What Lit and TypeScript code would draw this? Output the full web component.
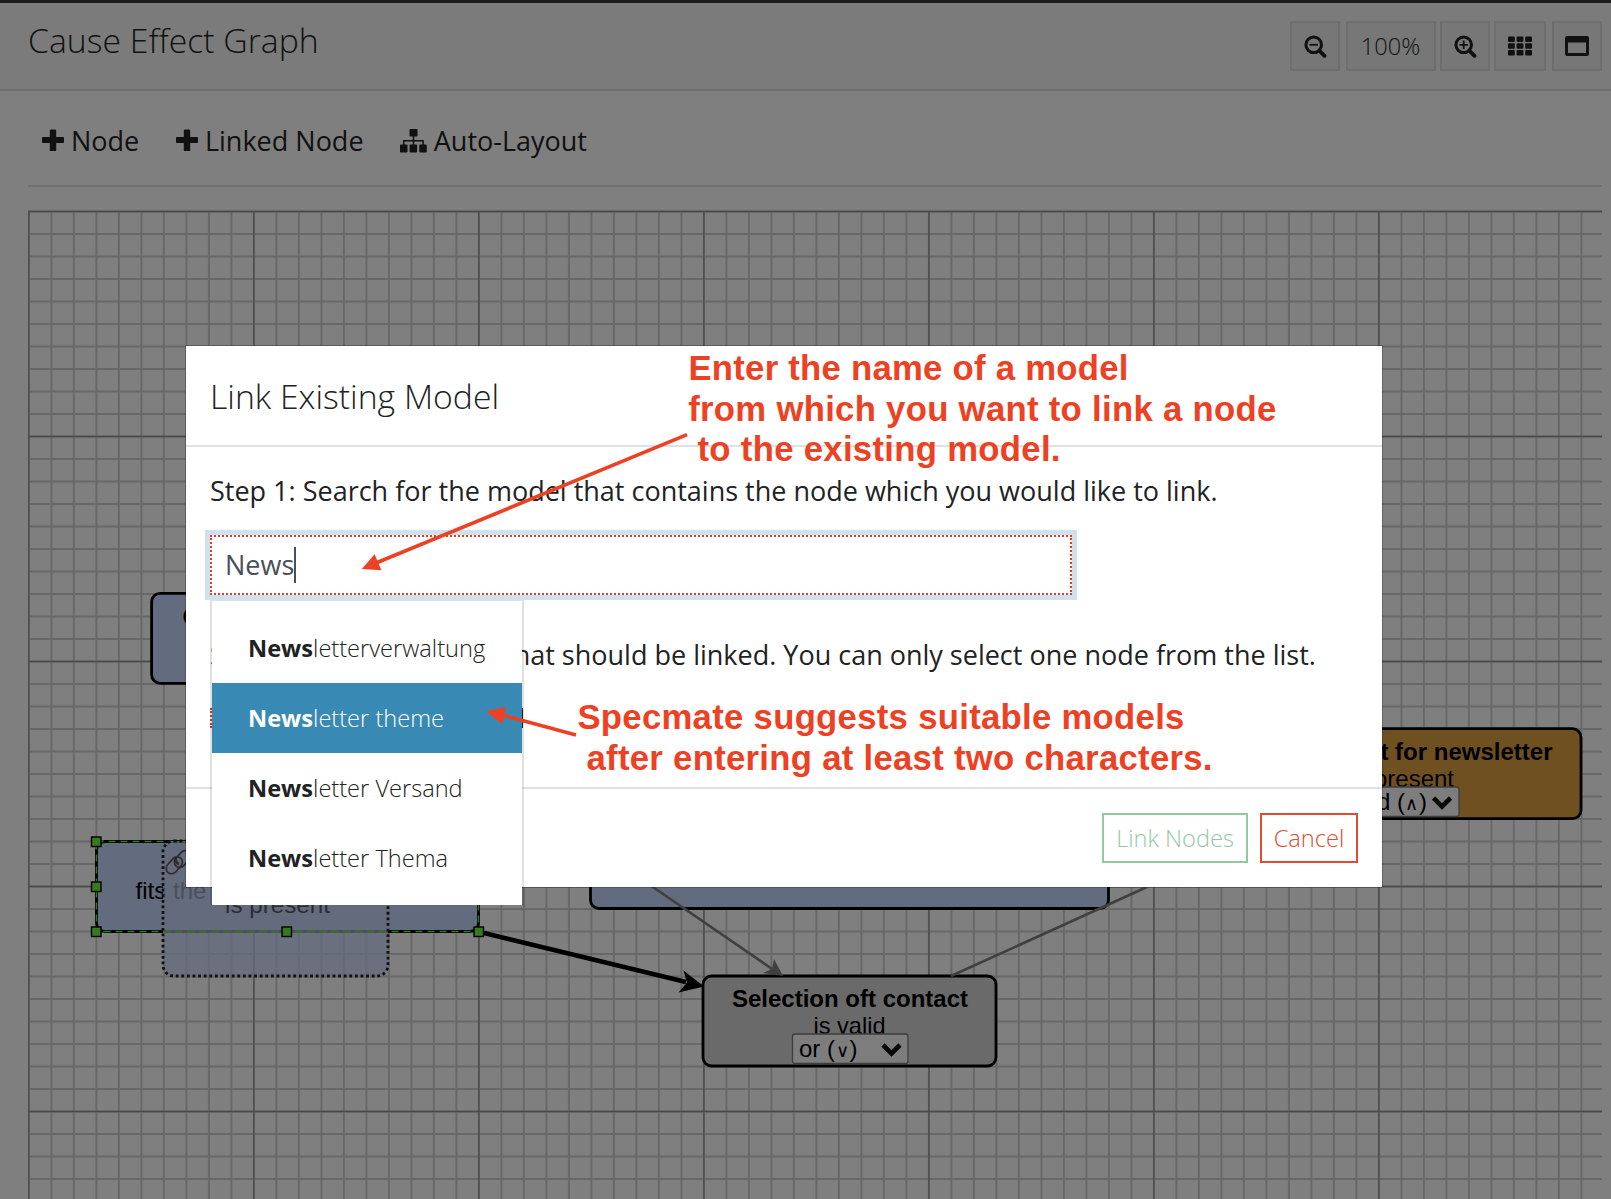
import { LitElement, html, css, svg } from "lit";
import { customElement } from "lit/decorators.js";

const chevron = (x: number, y: number) =>
  svg`<path d="M${x} ${y}l8.5 8.5l8.5-8.5" fill="none" stroke="#080808" stroke-width="4.6"></path>`;

const handle = (x: number, y: number) =>
  svg`<rect x=${x - 5} y=${y - 5} width="9.5" height="9.5" fill="#357a1f" stroke="#000" stroke-width="1.4"></rect>`;

const gridPath = (step: number) => {
  let d = "";
  for (let x = 28.9; x < 1602; x += step) d += `M${x} 210.7V1199`;
  for (let y = 211.5; y < 1199; y += step) d += `M28 ${y}H1602`;
  return d;
};
const minorGrid = gridPath(22.5);
const majorGrid = gridPath(225);

@customElement("graph-canvas")
export class GraphCanvas extends LitElement {
  static styles = css`
    :host { display: block; overflow: hidden; }
    svg { display: block; font-family: "Liberation Sans", Arial, sans-serif; font-size: 24px; }
    .bold { font-weight: 700; }
    .sign { font-family: "DejaVu Sans Light", "DejaVu Sans", sans-serif; font-weight: 200; font-size: 18px; }
  `;
  render() {
    return html`<svg width="1574" height="989" viewBox="28 210 1574 989">
      <path d=${minorGrid} stroke="#686868" stroke-width="1.9" fill="none"></path>
      <path d=${majorGrid} stroke="#4a4a4a" stroke-width="1.3" fill="none"></path>

      <g fill="#636b7e" stroke="#000" stroke-width="2.8">
        <rect x="151.6" y="593.3" width="380" height="90" rx="8.5"></rect>
        <rect x="590.5" y="818" width="518" height="90.5" rx="8.5"></rect>
        <rect x="96.5" y="841.5" width="382" height="90" rx="8.5"></rect>
        <rect x="703" y="976" width="293" height="90" rx="8.5" fill="#6a6a6a"></rect>
        <rect x="1200" y="728.7" width="381" height="90" rx="8.5" fill="#6f5020"></rect>
      </g>
      <rect x="96.5" y="841.5" width="382" height="90" fill="none" stroke="#2f7a1c" stroke-width="1.4" stroke-dasharray="7 5"></rect>
      <text x="182.5" y="625" class="bold">Contact</text>
      <text x="135.5" y="899" textLength="71" lengthAdjust="spacingAndGlyphs">fits the</text>
      <rect x="163" y="841" width="225" height="135" rx="11" fill="#636b7e" fill-opacity=".75" stroke="#111" stroke-width="2.8" stroke-dasharray="2.8 2.8"></rect>
      <path d="M163 931.5H388" stroke="#347322" stroke-width="1.4" stroke-dasharray="7 5"></path>
      <g fill="none" stroke="#2e2c30" stroke-width="1.7">
        <rect x="-9.500" y="-5.4" width="19" height="10.8" rx="5.4" transform="translate(174.300 865.300) rotate(-48)"></rect>
        <rect x="-9.500" y="-5.4" width="19" height="10.8" rx="5.4" transform="translate(182.500 859) rotate(-48)"></rect>
        <path d="M175.500 857.500q-.5 5 3.500 6.500" stroke-width="3"></path>
      </g>
      <text x="225" y="912.7" fill="#2d2d31" textLength="105" lengthAdjust="spacingAndGlyphs">is present</text>
      ${handle(96.5, 842)} ${handle(96.5, 887)} ${handle(96.5, 932)} ${handle(287, 932)} ${handle(479, 932)}

      <g stroke="#404040" stroke-width="2.6" fill="#404040">
        <path d="M650 885L775 971"></path>
        <path d="M951 976L1147 887"></path>
        <path d="M783 976L763 973L772 969L774 959Z" stroke="none"></path>
      </g>
      <path d="M484 933L686 982" stroke="#000" stroke-width="4.6"></path>
      <path d="M704 986.5L678.5 992.5L687 982.5L683.5 970.5Z"></path>

      <text x="732" y="1006.7" class="bold" textLength="236" lengthAdjust="spacingAndGlyphs">Selection oft contact</text>
      <text x="813.5" y="1034" textLength="72" lengthAdjust="spacingAndGlyphs">is valid</text>
      <rect x="792.5" y="1034" width="115.5" height="29.5" rx="2.5" fill="#7d7d7d" stroke="#3e3e3e" stroke-width="1.3"></rect>
      <text x="799" y="1056.7">or (</text>
      <text x="836" y="1056.7" class="sign">∨</text>
      <text x="849.5" y="1056.7">)</text>
      ${chevron(883, 1045)}

      <text x="1552.5" y="760" text-anchor="end" class="bold">Request for newsletter</text>
      <text x="1454" y="787" text-anchor="end">is present</text>
      <rect x="1344" y="787" width="115" height="29.5" rx="2.5" fill="#7d7d7d" stroke="#3e3e3e" stroke-width="1.3"></rect>
      <text x="1405" y="809.8" text-anchor="end">and (</text>
      <text x="1405" y="809.8" class="sign">∧</text>
      <text x="1419" y="809.8">)</text>
      ${chevron(1433.5, 798)}
    </svg>`;
  }
}

@customElement("link-dialog")
export class LinkDialog extends LitElement {
  static styles = css`
    :host { display: flex; flex-direction: column; box-sizing: border-box; width: 1196px; height: 541px; background: #fff; color: #212223; font: 27px/40px "Open Sans", sans-serif; box-shadow: 0 0 0 1px rgba(0,0,0,.2); }
    .head { box-sizing: border-box; height: 101px; flex: none; padding: 25px 24px; border-bottom: 2px solid #dee2e6; font-size: 33.75px; font-weight: 300; line-height: 50px; }
    .body { flex: 1; padding: 24px 24px 0; }
    .step { height: 40px; white-space: nowrap; }
    .search { position: relative; margin-top: 24px; }
    .field { box-sizing: border-box; width: 862px; height: 60px; border: 2px dotted #ee3322; outline: 5px solid #cde2ed; background: #fff; color: #495057; padding: 8px 13px; display: flex; align-items: center; }
    .caret { width: 2px; height: 36px; background: #495057; }
    .two { margin-top: 40px; height: 40px; white-space: nowrap; display: flex; }
    .nodes { display: flex; margin-top: 33px; width: 313px; height: 20px; border-left: 2px dotted #ee3322; border-right: 2px solid #222; box-sizing: border-box; }
    .menu { position: absolute; z-index: 2; top: 65px; left: 0; box-sizing: border-box; width: 313.5px; height: 305px; padding: 12px 0; background: #fff; background-clip: padding-box; border: solid rgba(0,0,0,.12); border-width: 1px 2px 0; font-size: 23.6px; font-weight: 300; }
    .row { height: 70px; display: flex; align-items: center; padding-left: 36px; white-space: pre; }
    .row.on { background: #3989b5; color: #fff; }
    b { font-weight: 700; }
    .foot { box-sizing: border-box; height: 100px; flex: none; border-top: 2px solid #dee2e6; display: flex; justify-content: flex-end; gap: 12px; padding: 24px 24px 0 0; }
    .btn { box-sizing: border-box; height: 50px; width: 146px; border: 2px solid #93c9a1; color: #93c9a1; display: flex; justify-content: center; align-items: center; font-size: 23.6px; font-weight: 300; }
    .cancel { width: 98px; border-color: #e04b32; color: #e04b32; }
  `;
  render() {
    const names = ["letterverwaltung", "letter theme", "letter Versand", "letter Thema"];
    return html`
      <div class="head">Link Existing Model</div>
      <div class="body">
        <div class="step">Step 1: Search for the model that contains the node which you would like to link.</div>
        <div class="search">
          <div class="field">News<span class="caret"></span></div>
          <div class="menu">${names.map((n, i) => html`<div class="row ${i === 1 ? "on" : ""}"><b>News</b>${n}</div>`)}</div>
        </div>
        <div class="two">Step 2: Select the node that should be linked. You can only select one node from the list.</div>
        <div class="nodes"></div>
      </div>
      <div class="foot"><div class="btn">Link Nodes</div><div class="btn cancel">Cancel</div></div>`;
  }
}

const search = (sign: string) => html`<svg width="24" height="24" viewBox="0 0 24 24" fill="none" stroke="#111"><circle cx="10.7" cy="10.8" r="7.8" stroke-width="3"></circle><path d="M16.3 16.6L21.5 21.8" stroke-width="3.8" stroke-linecap="round"></path><path d=${sign} stroke-width="1.8"></path></svg>`;
const plus = html`<svg class="plus" width="22" height="22" viewBox="0 0 22 22"><path d="M9 0h4q1.200 0 1.200 1v6.600H21q1 0 1 1v4q0 1-1 1h-6.800v7.400q0 1-1.200 1H9q-1.200 0-1.200-1v-7.400H1q-1 0-1-1v-4q0-1 1-1h6.800V1q0-1 1.200-1z" transform="translate(0 .4)" fill="#111"></path></svg>`;

@customElement("app-root")
export class AppRoot extends LitElement {
  static styles = css`
    :host { display: block; position: relative; width: 1611px; height: 1199px; overflow: hidden; background: #7f7f7f; color: #111; font-family: "Open Sans", sans-serif; }
    .page { display: flex; flex-direction: column; height: 1199px; }
    .header { box-sizing: border-box; height: 91px; flex: none; border-top: 3px solid #1c1c1c; border-bottom: 2px solid #6d6d6d; background: #7b7b7b; display: flex; justify-content: space-between; padding: 0 9px 0 28px; }
    .title { font-size: 33.75px; font-weight: 300; line-height: 50px; margin-top: 12px; }
    .tools { display: flex; margin-top: 18px; }
    .tool { box-sizing: border-box; width: 50px; height: 50px; border: 2px solid #6e6e6e; background: #777; display: flex; align-items: center; justify-content: center; font-size: 23.6px; font-weight: 300; }
    .pct { width: 90px; margin: 0 4px 0 6px; padding-right: 1px; }
    .wide { width: 52px; margin: 0 6px 0 4px; }
    .bar { box-sizing: border-box; height: 96px; flex: none; margin: 0 9px 0 28px; border-bottom: 2px solid #707070; display: flex; align-items: center; font-size: 27px; line-height: 40px; padding: 5px 0 0 14px; }
    .item { display: flex; align-items: center; margin-right: 36.7px; }
    .plus { margin: -2px 7px 0 0; }
    .tree { margin: 1px 6.5px 0 0; }
    graph-canvas { margin: 23px 9px 0 28px; }
    link-dialog { position: absolute; left: 186px; top: 346px; }
    .notes { position: absolute; z-index: 5; left: 0; top: 0; font: 700 34.7px "Liberation Sans", Arial, sans-serif; fill: #ed4124; }
  `;
  render() {
    return html`
      <div class="page">
        <div class="header">
          <div class="title">Cause Effect Graph</div>
          <div class="tools">
            <div class="tool">${search("M6.5 10.8h8.4")}</div>
            <div class="tool pct">100%</div>
            <div class="tool">${search("M6.5 10.8h8.4M10.7 6.6v8.4")}</div>
            <div class="tool wide"><svg width="24" height="20" viewBox="0 0 24 20" fill="#111">${[0, 8.6, 17.2].map(x => [0.5, 7.3, 14.1].map(y => svg`<rect x=${x} y=${y} width="6.8" height="5.4" rx="1"></rect>`))}</svg></div>
            <div class="tool"><svg width="24" height="22" viewBox="0 0 24 22"><path fill="#111" fill-rule="evenodd" d="M2 1h20q2 0 2 2v16q0 2-2 2H2q-2 0-2-2V3q0-2 2-2zM3 7.5V18h18V7.5z"></path></svg></div>
          </div>
        </div>
        <div class="bar">
          <div class="item">${plus}<span>Node</span></div>
          <div class="item">${plus}<span>Linked Node</span></div>
          <div class="item"><svg class="tree" width="27" height="24" viewBox="0 0 27 24" fill="#111"><rect x="9.5" width="8" height="7.5" rx="1"></rect><rect y="15.5" width="7.5" height="8" rx="1"></rect><rect x="9.6" y="15.5" width="7.5" height="8" rx="1"></rect><rect x="19.3" y="15.5" width="7.5" height="8" rx="1"></rect><path d="M13.5 7v9M3.8 16v-4.200h19.300V16" fill="none" stroke="#111" stroke-width="1.5"></path></svg><span>Auto-Layout</span></div>
        </div>
        <graph-canvas></graph-canvas>
      </div>
      <link-dialog></link-dialog>
      <svg class="notes" width="1611" height="1199">
        <text x="688.4" y="380.4" textLength="440">Enter the name of a model</text>
        <text x="688.2" y="421.4" textLength="588">from which you want to link a node</text>
        <text x="697.5" y="461.4" textLength="363">to the existing model.</text>
        <text x="577.4" y="729.2" textLength="607">Specmate suggests suitable models</text>
        <text x="586.5" y="770.4" textLength="626">after entering at least two characters.</text>
        <g stroke="#ed4124" stroke-width="3.6"><path d="M687 434.7L376 563"></path><path d="M576 735L502 715"></path></g>
        <path d="M361.8 569L374.6 554.3L381.4 570.3Z"></path>
        <path d="M486 711.3L506 707L502 724Z"></path>
      </svg>`;
  }
}
